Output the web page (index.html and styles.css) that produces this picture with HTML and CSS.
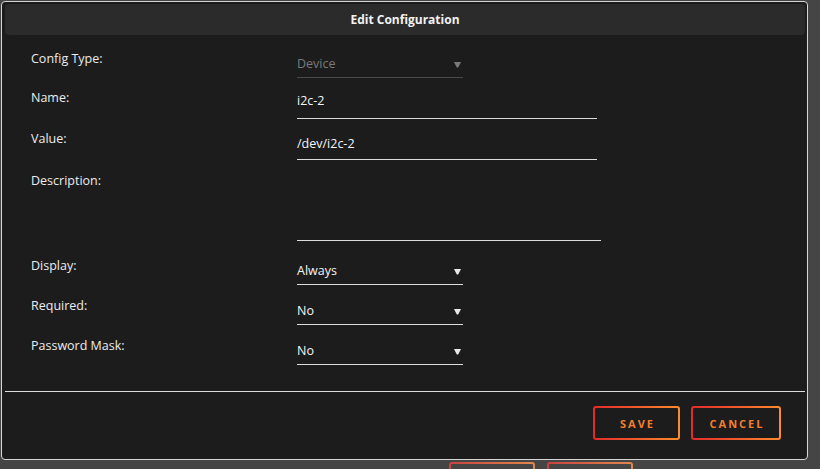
FILE: index.html
```html
<!DOCTYPE html>
<html>
<head>
<meta charset="utf-8">
<link rel="stylesheet" href="styles.css">
</head>
<body>
<div class="modal">
  <div class="modal-header">Edit Configuration</div>
  <div class="modal-body">
    <div class="row">
      <div class="label">Config Type:</div>
      <div class="field select disabled">
        <span>Device</span>
        <svg class="caret" width="7" height="7" viewBox="0 0 7 7"><path d="M0 1h7L4.2 6.5H2.8z" fill="currentColor"/></svg>
      </div>
    </div>
    <div class="row">
      <div class="label">Name:</div>
      <div class="field input">i2c-2</div>
    </div>
    <div class="row">
      <div class="label">Value:</div>
      <div class="field input input-value">/dev/i2c-2</div>
    </div>
    <div class="row row-desc">
      <div class="label">Description:</div>
      <div class="field textarea"></div>
    </div>
    <div class="row">
      <div class="label">Display:</div>
      <div class="field select">
        <span>Always</span>
        <svg class="caret" width="7" height="7" viewBox="0 0 7 7"><path d="M0 1h7L4.2 6.5H2.8z" fill="currentColor"/></svg>
      </div>
    </div>
    <div class="row row-low">
      <div class="label">Required:</div>
      <div class="field select">
        <span>No</span>
        <svg class="caret" width="7" height="7" viewBox="0 0 7 7"><path d="M0 1h7L4.2 6.5H2.8z" fill="currentColor"/></svg>
      </div>
    </div>
    <div class="row row-low">
      <div class="label">Password Mask:</div>
      <div class="field select">
        <span>No</span>
        <svg class="caret" width="7" height="7" viewBox="0 0 7 7"><path d="M0 1h7L4.2 6.5H2.8z" fill="currentColor"/></svg>
      </div>
    </div>
  </div>
  <div class="divider"></div>
  <div class="modal-footer">
    <button class="btn btn-save"><span>SAVE</span></button>
    <button class="btn btn-cancel"><span>CANCEL</span></button>
  </div>
</div>
<div class="under">
  <div class="ghost-btn"></div>
  <div class="ghost-btn"></div>
</div>
</body>
</html>
```
FILE: styles.css
```css
html, body {
  margin: 0;
  padding: 0;
  background: #454545;
  height: 469px;
  overflow: hidden;
}
body {
  font-family: "Open Sans", "Noto Sans", sans-serif;
  font-size: 12.5px;
  color: #ececec;
}
.modal {
  box-sizing: border-box;
  width: 807px;
  height: 459px;
  margin: 1px 0 0 1px;
  border: 1px solid #d6d6d6;
  border-radius: 4px;
  background: #1c1c1c;
  display: flex;
  flex-direction: column;
}
.modal-header {
  margin: 2px 2px 0 3px;
  height: 31px;
  background: #2b2b2b;
  border-radius: 4px;
  display: flex;
  align-items: center;
  justify-content: center;
  font-weight: 700;
  font-size: 12px;
  color: #f2f2f2;
}
.modal-body {
  padding: 15px 0 0 29px;
  display: flex;
  flex-direction: column;
  gap: 11px;
}
.row {
  display: grid;
  grid-template-columns: 266px auto;
  align-items: start;
}
.row-low {
  margin-top: 1px;
}
.label {
  line-height: 18px;
  color: #ececec;
}
.field {
  box-sizing: border-box;
  line-height: 18px;
  padding: 5px 0 4px;
  border-bottom: 1px solid #dcdcdc;
  color: #f4f4f4;
}
.input {
  width: 300px;
  padding: 3px 0 8px;
}
.input-value {
  padding: 5px 0 6px;
}
.select {
  width: 166px;
  display: flex;
  align-items: center;
  justify-content: space-between;
}
.caret {
  margin-right: 2px;
  color: #e8e8e8;
}
.disabled {
  color: #7a7a7a;
  border-bottom-color: #4a4a4a;
}
.disabled .caret {
  color: #7a7a7a;
}
.row-desc {
  margin-top: 1px;
  margin-bottom: 5px;
}
.textarea {
  width: 304px;
  height: 69px;
}
.divider {
  margin: 26px 2px 0 3px;
  height: 1px;
  background: #dcdcdc;
}
.modal-footer {
  display: flex;
  justify-content: flex-end;
  gap: 11px;
  padding: 14px 26px 0 0;
}
.btn {
  box-sizing: border-box;
  height: 34px;
  border: 2px solid transparent;
  border-radius: 3px;
  background:
    linear-gradient(#1c1c1c, #1c1c1c) padding-box,
    linear-gradient(90deg, #e32a2a, #ff8b2c) border-box;
  font-family: "Open Sans", "Noto Sans", sans-serif;
  font-weight: 700;
  font-size: 11px;
  letter-spacing: 2px;
  color: #f47e2d;
  padding: 0;
  cursor: pointer;
}
.btn span {
  margin-left: 2px;
}
.btn-save { width: 87px; }
.btn-cancel { width: 90px; }
.under {
  display: flex;
  gap: 12px;
  padding: 2px 0 0 449px;
}
.ghost-btn {
  box-sizing: border-box;
  width: 86px;
  height: 20px;
  border: 2px solid transparent;
  border-radius: 3px;
  background:
    linear-gradient(#454545, #454545) padding-box,
    linear-gradient(90deg, #c94242, #e0874a) border-box;
}
```
